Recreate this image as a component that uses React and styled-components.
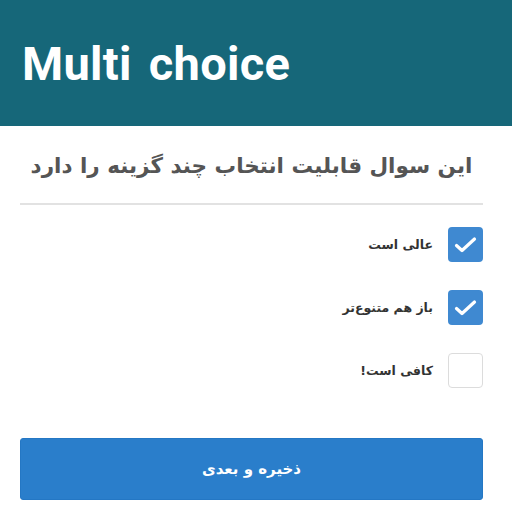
import React from "react";
import styled, { createGlobalStyle } from "styled-components";

const GlobalStyle = createGlobalStyle`
  html, body {
    margin: 0;
    padding: 0;
    background: #fff;
  }
`;

const OPTIONS = [
  { label: "عالی است", checked: true },
  { label: "باز هم متنوع‌تر", checked: true },
  { label: "کافی است!", checked: false },
];

const App = () => {
  return (
    <>
      <GlobalStyle />
      <Page>
        <Header>
          <Title>Multi choice</Title>
        </Header>
        <Body>
          <Question>این سوال قابلیت انتخاب چند گزینه را دارد</Question>
          <Divider />
          <OptionList>
            {OPTIONS.map((opt, idx) => (
              <Option key={`${opt.label}+${idx}`} {...opt} />
            ))}
          </OptionList>
          <SaveButton>ذخیره و بعدی</SaveButton>
        </Body>
      </Page>
    </>
  );
};

const Option = ({ label, checked }) => (
  <Row>
    <Box $checked={checked}>
      {checked && (
        <svg width="35" height="35" viewBox="0 0 35 35">
          <path
            d="M8.5 18.5 L14 23.5 L26.5 12"
            fill="none"
            stroke="#fff"
            strokeWidth="3.2"
            strokeLinecap="round"
            strokeLinejoin="round"
          />
        </svg>
      )}
    </Box>
    <Label>{label}</Label>
  </Row>
);

const Page = styled.div`
  width: 512px;
  height: 512px;
  overflow: hidden;
  display: flex;
  flex-direction: column;
`;

const Header = styled.header`
  height: 126px;
  background: #166779;
  display: flex;
  align-items: center;
  padding-left: 22px;
  box-sizing: border-box;
`;

const Title = styled.h1`
  margin: 0;
  color: #fff;
  font-family: Roboto, "Liberation Sans", sans-serif;
  font-weight: 700;
  font-size: 47px;
  letter-spacing: 0.3px;
  word-spacing: 5px;
`;

const Body = styled.main`
  display: flex;
  flex-direction: column;
  padding: 0 29px 0 20px;
`;

const Question = styled.h2`
  margin: 20px 0 0;
  height: 40px;
  line-height: 40px;
  text-align: center;
  direction: rtl;
  color: #555;
  font-family: "DejaVu Sans", sans-serif;
  font-weight: 700;
  font-size: 21.5px;
`;

const Divider = styled.hr`
  margin: 17px 0 0;
  border: none;
  border-top: 2px solid #e2e2e2;
`;

const OptionList = styled.ul`
  list-style: none;
  margin: 22px 0 0;
  padding: 0;
  display: flex;
  flex-direction: column;
  gap: 28px;
`;

const Row = styled.li`
  display: flex;
  flex-direction: row-reverse;
  align-items: center;
  gap: 15px;
  height: 35px;
`;

const Box = styled.span`
  width: 35px;
  height: 35px;
  box-sizing: border-box;
  border-radius: 4px;
  display: flex;
  align-items: center;
  justify-content: center;
  overflow: hidden;
  background: ${(p) => (p.$checked ? "#3f89d1" : "#fff")};
  border: ${(p) => (p.$checked ? "0" : "1px solid #dcdcdc")};
`;

const Label = styled.span`
  direction: rtl;
  color: #333;
  font-family: "DejaVu Sans", sans-serif;
  font-weight: 700;
  font-size: 12.5px;
`;

const SaveButton = styled.button`
  margin-top: 50px;
  height: 62px;
  width: 100%;
  border: 1px solid #2477c4;
  border-radius: 3px;
  background: #2a7ecb;
  color: #fff;
  direction: rtl;
  font-family: "DejaVu Sans", sans-serif;
  font-weight: 700;
  font-size: 15px;
  cursor: pointer;
`;

export default App;
